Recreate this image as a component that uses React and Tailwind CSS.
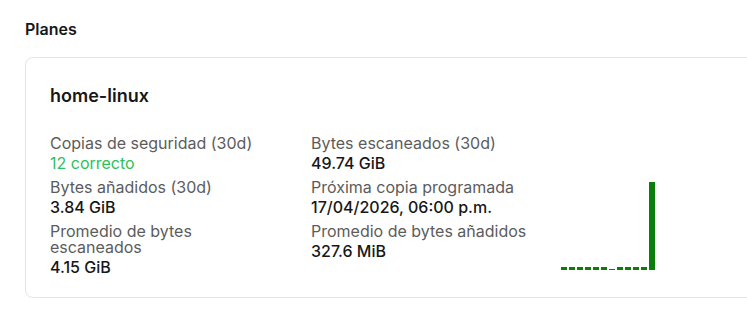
const stats = [
    [
        { label: "Copias de seguridad (30d)", value: "12 correcto", ok: true },
        { label: "Bytes añadidos (30d)", value: "3.84 GiB" },
        { label: "Promedio de bytes escaneados", value: "4.15 GiB" },
    ],
    [
        { label: "Bytes escaneados (30d)", value: "49.74 GiB" },
        { label: "Próxima copia programada", value: "17/04/2026, 06:00 p.m." },
        { label: "Promedio de bytes añadidos", value: "327.6 MiB" },
    ],
];

// bytes added per run, last 12 runs
const bars = [3, 3, 3, 3, 3, 3, 1, 3, 3, 3, 3, 88];

function Stat({ label, value, ok }) {
    return (
        <div className="flex flex-col">
            <div className="text-[16px] leading-4 text-[#5c5c5c]">{label}</div>
            <div
                className={`mt-0.5 text-[16px] leading-5 ${
                    ok ? "text-[#2ec05a]" : "font-medium text-neutral-900"
                }`}
            >
                {value}
            </div>
        </div>
    );
}

export default function App() {
    return (
        <div
            className="w-[747px] h-[310px] overflow-hidden bg-white pl-[25px] pt-[17px]"
            style={{ fontFamily: "Inter, 'Noto Sans', sans-serif" }}
        >
            <h2 className="text-[16px] leading-6 font-semibold text-neutral-900">Planes</h2>

            <div className="mt-4 w-[760px] rounded-lg border border-neutral-200 px-6 pt-6 pb-5">
                <h3 className="text-lg leading-7 font-semibold text-neutral-900">home-linux</h3>

                <div className="mt-[25px] grid grid-cols-[261px_250px_1fr]">
                    {stats.map((col, i) => (
                        <div key={i} className="flex flex-col gap-1.5 pr-6">
                            {col.map((s) => (
                                <Stat key={s.label} {...s} />
                            ))}
                        </div>
                    ))}

                    {/* chart */}
                    <div className="flex items-end gap-[2px] self-end mb-[7px]">
                        {bars.map((h, i) => (
                            <div key={i} className="w-[6px] bg-[#0a7d0a]" style={{ height: h }} />
                        ))}
                    </div>
                </div>
            </div>
        </div>
    );
}
